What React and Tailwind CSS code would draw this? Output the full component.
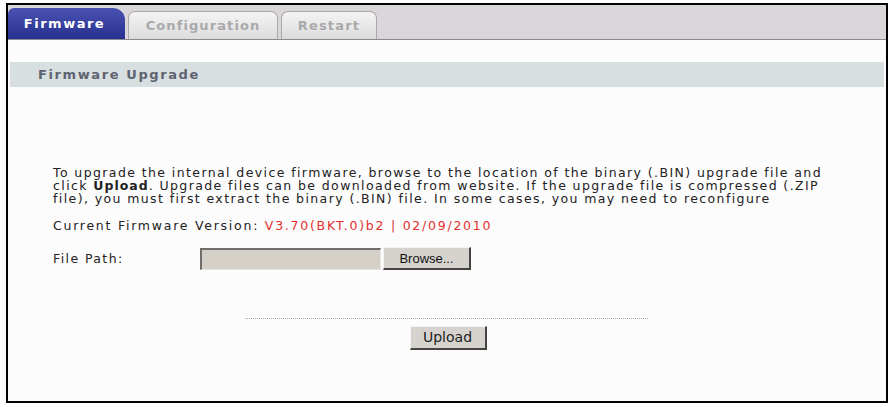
export default function App() {
  const font = { fontFamily: '"DejaVu Sans", Verdana, sans-serif' };
  return (
    <div className="w-[895px] h-[407px] bg-white" style={font}>
      <div className="h-[3px]" />
      <div className="ml-[6px] w-[882px] h-[400px] border-[2px] border-black flex flex-col bg-[#fdfcfc]">
        {/* tab bar */}
        <div className="h-[35px] flex items-end gap-[3px] border-b border-[#8c8a8c] bg-[repeating-linear-gradient(180deg,#dcd8dc_0px,#dcd8dc_1px,#d2ced2_2px)]">
          <div className="w-[117px] h-[31px] rounded-tl-[6px] rounded-tr-[12px] bg-gradient-to-b from-[#4a52b2] to-[#28308f] text-white text-[13px] tracking-[1.5px] font-bold flex items-center justify-center pr-[4px]">
            Firmware
          </div>
          <div className="w-[150px] h-[28px] rounded-t-[7px] border border-b-0 border-[#aaa7aa] bg-gradient-to-b from-[#f4f4f4] to-[#dddcdd] text-[#a9a9ab] text-[13px] tracking-[1.1px] font-bold flex items-center justify-center">
            Configuration
          </div>
          <div className="w-[96px] h-[28px] rounded-t-[7px] border border-b-0 border-[#aaa7aa] bg-gradient-to-b from-[#f4f4f4] to-[#dddcdd] text-[#a9a9ab] text-[13px] tracking-[1.2px] font-bold flex items-center justify-center">
            Restart
          </div>
        </div>

        {/* section header */}
        <div className="mt-[22px] mx-[2px] h-[25px] bg-[#d7dfe0] flex items-center pl-[28px] text-[13px] tracking-[1.6px] font-bold text-[#5e6370]">
          Firmware Upgrade
        </div>

        <div className="pl-[45px] pr-[30px] text-[12.5px] tracking-[1.4px] text-[#222] leading-[13px]">
          <p className="mt-[79px]">
            To upgrade the internal device firmware, browse to the location of the binary (.BIN) upgrade file and
            <br />
            click <b className="tracking-[1px]">Upload</b>. Upgrade files can be downloaded from website. If the upgrade file is compressed (.ZIP
            <br />
            file), you must first extract the binary (.BIN) file. In some cases, you may need to reconfigure
          </p>
          <div className="mt-[14px] tracking-[1.75px]">
            Current Firmware Version: <span className="text-[#e0302c]">V3.70(BKT.0)b2 | 02/09/2010</span>
          </div>
          <div className="mt-[15px] flex items-center">
            <span className="w-[147px]">File Path:</span>
            <div className="w-[181px] h-[22px] bg-[#d4d0c8] border-t-2 border-l-2 border-[#6f6d69] border-b border-r border-b-[#e8e6e2] border-r-[#e8e6e2]" />
            <button className="ml-[2px] w-[88px] h-[23px] bg-[#d6d3ce] border border-t-[#f4f3f1] border-l-[#f4f3f1] border-b-2 border-r-2 border-b-[#444] border-r-[#444] text-[13px] tracking-normal text-[#111] font-['Liberation_Sans',Arial,sans-serif]">
              Browse...
            </button>
          </div>
        </div>

        <div className="mt-[48px] ml-[237px] w-[403px] border-t border-dotted border-[#a8a8a8]" />
        <div className="mt-[7px] flex justify-center pr-[40px]">
          <button className="ml-[42px] w-[77px] h-[24px] bg-[#d6d3ce] border border-t-[#f4f3f1] border-l-[#f4f3f1] border-b-2 border-r-2 border-b-[#444] border-r-[#444] text-[14px] text-[#222]">
            Upload
          </button>
        </div>
      </div>
    </div>
  );
}
